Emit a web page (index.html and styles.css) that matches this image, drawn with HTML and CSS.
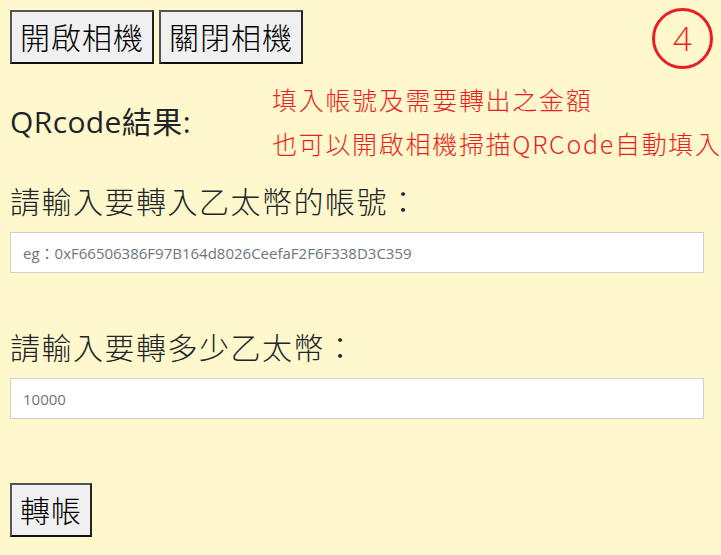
FILE: index.html
```html
<!DOCTYPE html>
<html lang="zh-Hant">
<head>
<meta charset="utf-8">
<title>轉帳</title>
<link rel="stylesheet" href="styles.css">
</head>
<body>
<div class="page">
  <div class="toolbar">
    <button class="btn">開啟相機</button>
    <button class="btn">關閉相機</button>
  </div>
  <div class="result">QRcode結果:</div>
  <label class="label" for="addr">請輸入要轉入乙太幣的帳號：</label>
  <input class="field" id="addr" type="text" placeholder="eg：0xF66506386F97B164d8026CeefaF2F6F338D3C359">
  <label class="label label-2" for="amount">請輸入要轉多少乙太幣：</label>
  <input class="field" id="amount" type="text" placeholder="10000">
  <div class="submit-row">
    <button class="btn">轉帳</button>
  </div>

  <div class="note">
    <div>填入帳號及需要轉出之金額</div>
    <div>也可以開啟相機掃描QRCode自動填入</div>
  </div>
  <div class="step">4</div>
</div>
</body>
</html>
```
FILE: styles.css
```css
html, body {
  margin: 0;
  padding: 0;
  background: #fff8cc;
  overflow: hidden;
}
.page {
  position: relative;
  padding: 10px;
  height: 535px;
  font-family: "Open Sans", "Noto Sans CJK TC", sans-serif;
  color: #212529;
}
.toolbar {
  display: flex;
  gap: 5px;
}
.btn {
  font-family: "Noto Sans CJK TC", sans-serif;
  font-size: 30px;
  line-height: 41px;
  padding: 4px 8px 5px 8px;
  margin: 0;
  background: #f0f0f0;
  color: #000;
  border: 2px solid;
  border-color: #555 #222 #111 #555;
  border-radius: 0;
  letter-spacing: 1px;
  font-weight: 300;
}
.result {
  margin-top: 38px;
  font-size: 30px;
  line-height: 40px;
  letter-spacing: 0.4px;
}
.label {
  display: block;
  margin-top: 38px;
  font-family: "Noto Sans CJK TC", sans-serif;
  font-size: 30px;
  line-height: 40px;
  letter-spacing: 1.5px;
  font-weight: 300;
}
.label-2 {
  margin-top: 53px;
}
.field {
  display: block;
  box-sizing: border-box;
  width: 694px;
  height: 41px;
  margin-top: 12px;
  padding: 0 12px;
  border: 1px solid #d0d0d0;
  background: #fff;
  font-family: "Open Sans", "Noto Sans CJK TC", sans-serif;
  font-size: 15px;
  color: #495057;
  outline: none;
}
.field::placeholder {
  color: #6c757d;
}
.submit-row {
  margin-top: 64px;
}
.note {
  position: absolute;
  left: 272px;
  top: 77px;
  font-family: "Noto Sans CJK TC", sans-serif;
  font-size: 25px;
  line-height: 44px;
  letter-spacing: 1.7px;
  color: #ed1c24;
  white-space: nowrap;
  font-weight: 300;
}
.step {
  position: absolute;
  left: 652px;
  top: 8px;
  width: 55px;
  height: 55px;
  border: 3px solid #ed1c24;
  border-radius: 50%;
  display: flex;
  align-items: center;
  justify-content: center;
  font-family: "Open Sans", sans-serif;
  font-size: 33px;
  font-weight: 300;
  color: #ed1c24;
  line-height: 1;
}
```
